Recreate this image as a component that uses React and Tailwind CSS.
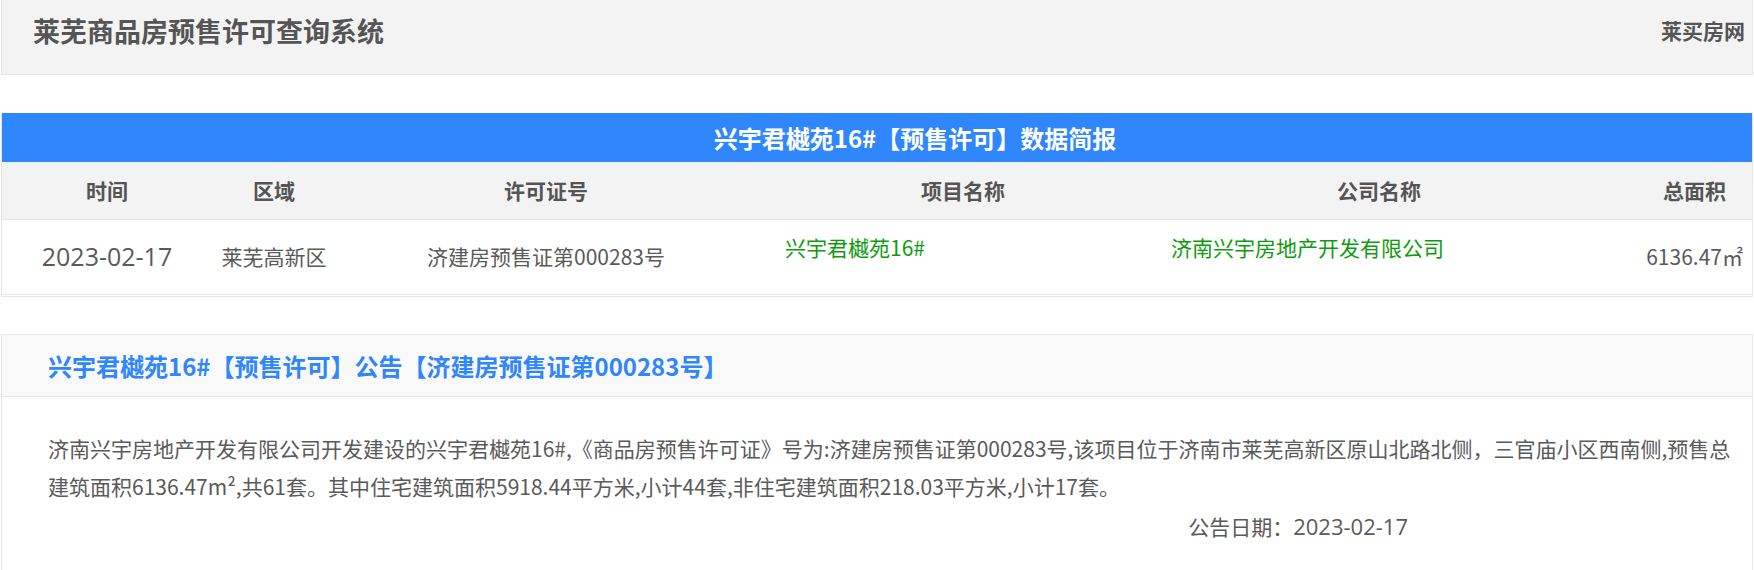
import React from 'react';

const FONT = '[font-family:"Noto_Sans_CJK_SC","Microsoft_YaHei",sans-serif]';

const summary = {
  date: '2023-02-17',
  area: '莱芜高新区',
  permit: '济建房预售证第000283号',
  project: '兴宇君樾苑16#',
  company: '济南兴宇房地产开发有限公司',
  total: '6136.47',
};

const notice =
  '济南兴宇房地产开发有限公司开发建设的兴宇君樾苑16#,《商品房预售许可证》号为:济建房预售证第000283号,该项目位于济南市莱芜高新区原山北路北侧，三官庙小区西南侧,预售总建筑面积6136.47m²,共61套。其中住宅建筑面积5918.44平方米,小计44套,非住宅建筑面积218.03平方米,小计17套。';

const cols = 'grid grid-cols-[210px_124px_420px_414px_418px_1fr]';

export default function App() {
  return (
    <div className={`${FONT} min-h-[570px] bg-white px-px text-[#5a5a5a]`}>
      {/* top bar */}
      <div className="flex h-[75px] items-start justify-between border border-t-0 border-[#e6e6e6] bg-[#f3f3f3] pl-[31px] pr-[7px]">
        <h1 className="pt-[13px] text-[27px] font-bold leading-[36px] text-[#555]">莱芜商品房预售许可查询系统</h1>
        <span className="pt-[15px] text-[21px] font-bold leading-[30px] text-[#555]">莱买房网</span>
      </div>

      {/* summary table */}
      <div className="mt-[38px] border-x border-b border-[#e6e6e6] pb-px">
        <div className="flex h-[49px] items-center justify-center bg-[#2f86fd] pl-[76px] text-[24px] font-bold text-white">
          兴宇君樾苑16#【预售许可】数据简报
        </div>
        <div className={`${cols} h-[58px] items-center border-b border-[#e6e6e6] bg-[#f3f3f3] text-[21px] font-bold text-[#555]`}>
          <div className="text-center">时间</div>
          <div className="text-center">区域</div>
          <div className="text-center">许可证号</div>
          <div className="text-center">项目名称</div>
          <div className="text-center">公司名称</div>
          <div className="pr-[26px] text-right">总面积</div>
        </div>
        <div className={`${cols} h-[75px] items-center border-b border-[#e6e6e6] text-[21px]`}>
          <div className='text-center [font-family:"Open_Sans",sans-serif] text-[25px]'>{summary.date}</div>
          <div className="text-center">{summary.area}</div>
          <div className="text-center">{summary.permit}</div>
          <div className="pb-[18px] pl-[29px] text-[#0e9c0e]">{summary.project}</div>
          <div className="pb-[18px] pl-px text-[#0e9c0e]">{summary.company}</div>
          <div className="pr-[9px] text-right">{summary.total}㎡</div>
        </div>
      </div>

      {/* notice */}
      <div className="mt-[37px] min-h-[240px] border border-b-0 border-[#e6e6e6]">
        <div className="flex h-[62px] items-center border-b border-[#e6e6e6] bg-[#f9f9f9] pl-[46px] text-[24px] font-bold text-[#2f86fd]">
          兴宇君樾苑16#【预售许可】公告【济建房预售证第000283号】
        </div>
        <div className="pl-[46px] pr-[8px] pt-[32px] text-[21px]">
          <p className="leading-[38px]">{notice}</p>
          <div className="mt-[2px] flex items-baseline justify-end pr-[336px] leading-[38px]">
            公告日期：<span className='[font-family:"Open_Sans",sans-serif] text-[22px]'>2023-02-17</span>
          </div>
        </div>
      </div>
    </div>
  );
}
